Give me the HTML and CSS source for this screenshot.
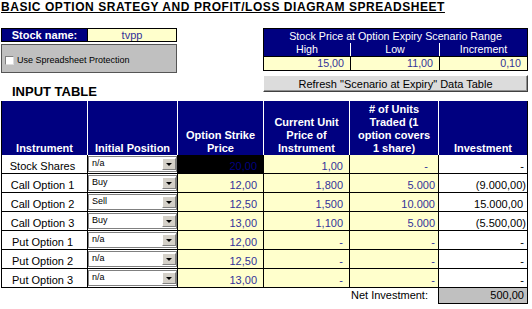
FILE: index.html
```html
<!DOCTYPE html>
<html lang="en">
<head>
    <meta charset="UTF-8">
    <meta name="viewport" content="width=device-width, initial-scale=1.0">
    <title>Basic Option Strategy</title>
    <link rel="stylesheet" href="styles.css">
</head>
<body>
    <div class="sheet">
        <h1 class="title">BASIC OPTION SRATEGY AND PROFIT/LOSS DIAGRAM SPREADSHEET</h1>

        <div class="top">
            <div class="top-left">
                <div class="stock-name">
                    <span class="label">Stock name:</span>
                    <span class="value">tvpp</span>
                </div>
                <div class="protect">
                    <span class="checkbox"></span>Use Spreadsheet Protection
                </div>
                <h2 class="section">INPUT TABLE</h2>
            </div>

            <div class="top-right">
                <div class="range">
                    <div class="range-title">Stock Price at Option Expiry Scenario Range</div>
                    <div class="range-row range-head">
                        <div>High</div>
                        <div>Low</div>
                        <div>Increment</div>
                    </div>
                    <div class="range-row range-vals">
                        <div>15,00</div>
                        <div>11,00</div>
                        <div>0,10</div>
                    </div>
                </div>
                <button class="refresh">Refresh "Scenario at Expiry" Data Table</button>
            </div>
        </div>

        <div class="input-table">
            <div class="hd">Instrument</div>
            <div class="hd">Initial Position</div>
            <div class="hd">Option Strike<br>Price</div>
            <div class="hd">Current Unit<br>Price of<br>Instrument</div>
            <div class="hd"># of Units<br>Traded (1<br>option covers<br>1 share)</div>
            <div class="hd last">Investment</div>

            <div class="cell name">Stock Shares</div>
            <div class="cell pos"><div class="dropdown">n/a<span class="arrow"></span></div></div>
            <div class="cell num black">20,00</div>
            <div class="cell num">1,00</div>
            <div class="cell num dash first-dash">-</div>
            <div class="cell inv dash">-</div>

            <div class="cell name">Call Option 1</div>
            <div class="cell pos"><div class="dropdown">Buy<span class="arrow"></span></div></div>
            <div class="cell num">12,00</div>
            <div class="cell num">1,800</div>
            <div class="cell num units">5.000</div>
            <div class="cell inv neg">(9.000,00)</div>

            <div class="cell name">Call Option 2</div>
            <div class="cell pos"><div class="dropdown">Sell<span class="arrow"></span></div></div>
            <div class="cell num">12,50</div>
            <div class="cell num">1,500</div>
            <div class="cell num units">10.000</div>
            <div class="cell inv">15.000,00</div>

            <div class="cell name">Call Option 3</div>
            <div class="cell pos"><div class="dropdown">Buy<span class="arrow"></span></div></div>
            <div class="cell num">13,00</div>
            <div class="cell num">1,100</div>
            <div class="cell num units">5.000</div>
            <div class="cell inv neg">(5.500,00)</div>

            <div class="cell name">Put Option 1</div>
            <div class="cell pos"><div class="dropdown">n/a<span class="arrow"></span></div></div>
            <div class="cell num">12,00</div>
            <div class="cell num dash">-</div>
            <div class="cell num units dash">-</div>
            <div class="cell inv dash">-</div>

            <div class="cell name">Put Option 2</div>
            <div class="cell pos"><div class="dropdown">n/a<span class="arrow"></span></div></div>
            <div class="cell num">12,50</div>
            <div class="cell num dash">-</div>
            <div class="cell num units dash">-</div>
            <div class="cell inv dash">-</div>

            <div class="cell name">Put Option 3</div>
            <div class="cell pos"><div class="dropdown">n/a<span class="arrow"></span></div></div>
            <div class="cell num">13,00</div>
            <div class="cell num dash">-</div>
            <div class="cell num units dash">-</div>
            <div class="cell inv dash">-</div>
        </div>

        <div class="net">
            <div class="net-label">Net Investment:</div>
            <div class="net-value">500,00</div>
        </div>
    </div>
</body>
</html>
```

FILE: styles.css
```css
* {
    box-sizing: border-box;
}
body {
    margin: 0;
    background: #fff;
    color: #000;
    font-family: "Liberation Sans", Arial, sans-serif;
    font-size: 11px;
}
.sheet {
    width: 528px;
    padding-left: 1px;
}
.title {
    margin: 0 0 14px 0;
    font-size: 12px;
    line-height: 14px;
    font-weight: bold;
    letter-spacing: 0.55px;
    text-decoration: underline;
    white-space: nowrap;
}
.top {
    display: flex;
    justify-content: space-between;
}
.top-left {
    width: 176px;
}
.stock-name {
    display: grid;
    grid-template-columns: 86px 1fr;
    height: 14px;
    border: 1px solid #000;
    line-height: 12px;
    text-align: center;
}
.stock-name .label {
    background: #000080;
    color: #fff;
    font-weight: bold;
    border-right: 1px solid #000;
}
.stock-name .value {
    background: #ffffcc;
    color: #333399;
}
.protect {
    margin-top: 2px;
    height: 29px;
    padding-top: 3px;
    border: 1px solid #555;
    background: #c0c0c0;
    display: flex;
    align-items: center;
    font-size: 9px;
}
.checkbox {
    width: 9px;
    height: 9px;
    margin: 0 3px 0 3px;
    background: #fff;
    border: 1px solid #808080;
    border-right-color: #ddd;
    border-bottom-color: #ddd;
}
.section {
    margin: 11px 0 0 11px;
    font-size: 13px;
    line-height: 16px;
    font-weight: bold;
}
.top-right {
    width: 265px;
}
.range {
    border: 1px solid #000;
    background: #000080;
    color: #fff;
    font-size: 10.7px;
}
.range-title {
    height: 14px;
    line-height: 14px;
    text-align: center;
}
.range-row {
    display: grid;
    grid-template-columns: 87px 89px 1fr;
}
.range-head div {
    height: 13px;
    line-height: 13px;
    text-align: center;
    border-right: 1px solid #fff;
}
.range-head div:last-child {
    border-right: none;
}
.range-vals {
    border-top: 1px solid #000;
    background: #ffffcc;
    color: #333399;
}
.range-vals div {
    height: 13px;
    line-height: 13px;
    text-align: right;
    padding-right: 6px;
    border-right: 1px solid #000;
}
.range-vals div:last-child {
    border-right: none;
}
.refresh {
    display: block;
    width: 100%;
    height: 17px;
    margin-top: 4px;
    padding: 0;
    background: #dcdcdc;
    border: 1px solid;
    border-color: #fff #404040 #404040 #fff;
    box-shadow: inset -1px -1px 0 #909090;
    font-family: inherit;
    font-size: 11px;
    line-height: 14px;
    color: #000;
}
.input-table {
    display: grid;
    grid-template-columns: 86px 90px 86px 86px 89px 89px;
    width: 527px;
    margin-top: 1px;
    border-left: 1px solid #000;
}
.hd {
    height: 54px;
    display: flex;
    align-items: flex-end;
    justify-content: center;
    text-align: center;
    background: #000080;
    color: #fff;
    font-weight: bold;
    line-height: 13px;
    border-right: 1px solid #fff;
}
.hd.last {
    border-right-color: #000;
}
.cell {
    height: 19px;
    display: flex;
    align-items: flex-end;
    line-height: 13px;
    padding: 0 6px 0 2px;
    border-right: 1px solid #000;
    border-bottom: 1px solid #000;
    background: #fff;
    white-space: nowrap;
}
.name {
    justify-content: center;
}
.num {
    justify-content: flex-end;
    background: #ffffcc;
    color: #333399;
}
.num.black {
    background: #000;
    color: #000080;
}
.units {
    padding-right: 3px;
}
.first-dash {
    padding-right: 10px;
}
.inv {
    justify-content: flex-end;
    padding-right: 4px;
}
.inv.neg {
    padding-right: 1px;
}
.inv.dash {
    padding-right: 3px;
}
.pos {
    align-items: flex-start;
    padding: 1px 0 0 0;
}
.dropdown {
    flex: 1;
    height: 16px;
    display: flex;
    justify-content: space-between;
    align-items: flex-start;
    padding: 1px 0 0 3px;
    background: #fff;
    border: 1px solid #808080;
    font-size: 9px;
    line-height: 11px;
}
.arrow {
    width: 14px;
    height: 12px;
    display: flex;
    align-items: center;
    justify-content: center;
    background: #d4d0c8;
    border: 1px solid;
    border-color: #fff #808080 #808080 #fff;
}
.arrow::after {
    content: "";
    border-left: 3px solid transparent;
    border-right: 3px solid transparent;
    border-top: 3px solid #000;
}
.net {
    display: grid;
    grid-template-columns: 437px 90px;
}
.net-label {
    text-align: right;
    padding-right: 10px;
    line-height: 15px;
}
.net-value {
    height: 16px;
    line-height: 14px;
    text-align: right;
    padding-right: 3px;
    background: #c0c0c0;
    border: 1px solid #000;
    border-top: none;
}
```
